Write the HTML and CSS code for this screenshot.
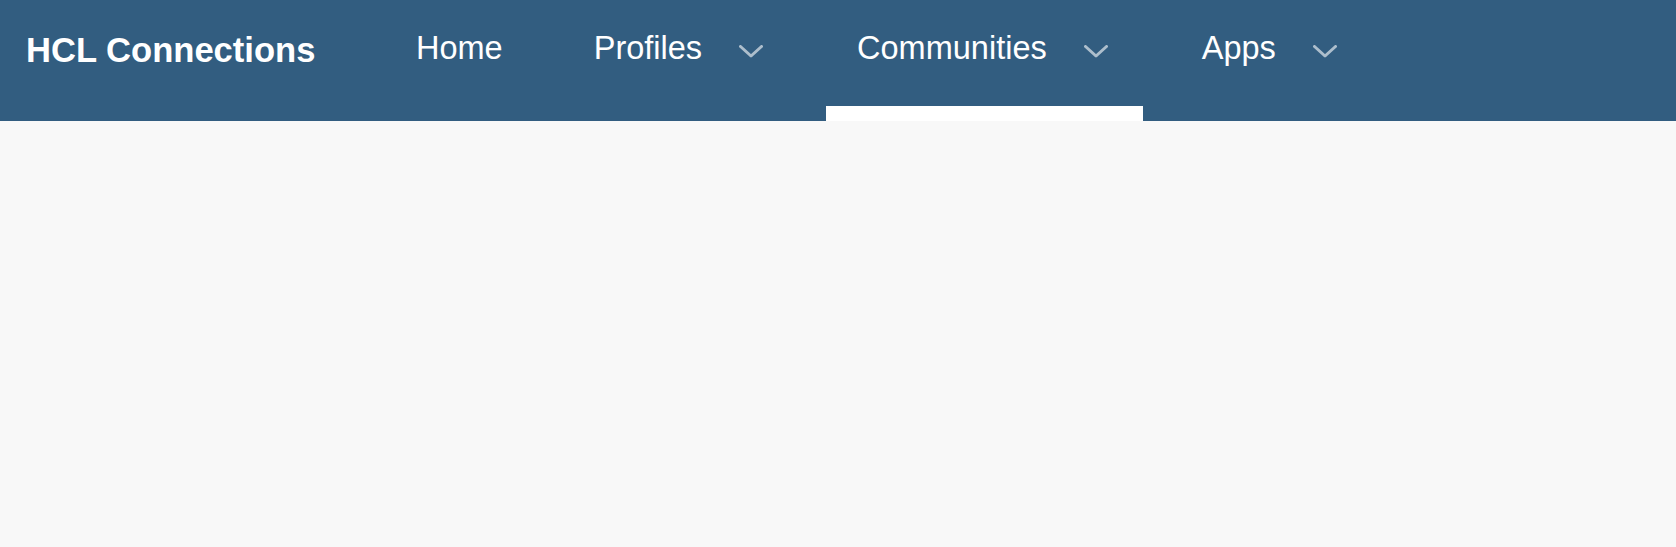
FILE: index.html
```html
<!DOCTYPE html>
<html lang="en">
<head>
<meta charset="utf-8">
<title>HCL Connections</title>
<link rel="stylesheet" href="styles.css">
</head>
<body>
<header class="topbar">
  <div class="brand">HCL Connections</div>
  <nav class="nav">
    <a class="nav-item nav-home">Home</a>
    <a class="nav-item">Profiles<svg class="chev" viewBox="0 0 24 13"><path d="M1.5 1.5 L12 11 L22.5 1.5"/></svg></a>
    <a class="nav-item active">Communities<svg class="chev" viewBox="0 0 24 13"><path d="M1.5 1.5 L12 11 L22.5 1.5"/></svg></a>
    <a class="nav-item">Apps<svg class="chev" viewBox="0 0 24 13"><path d="M1.5 1.5 L12 11 L22.5 1.5"/></svg></a>
  </nav>
</header>
<main class="content"></main>
</body>
</html>
```
FILE: styles.css
```css
* { box-sizing: border-box; }
html, body { margin: 0; padding: 0; }
body {
  background: #f8f8f8;
  font-family: "Liberation Sans", Arial, sans-serif;
  height: 547px;
  overflow: hidden;
}
.topbar {
  height: 121px;
  background: #325d80;
  display: flex;
  align-items: stretch;
  padding-left: 26px;
}
.brand {
  color: #ffffff;
  font-weight: bold;
  font-size: 34.6px;
  line-height: 1;
  padding-top: 33px;
  width: 359px;
  white-space: nowrap;
}
.nav {
  display: flex;
  align-items: stretch;
  gap: 28px;
}
.nav-item {
  position: relative;
  display: flex;
  align-items: flex-start;
  color: #ffffff;
  font-size: 32.5px;
  line-height: 1;
  padding: 32px 35px 0 31px;
  text-decoration: none;
  cursor: pointer;
  white-space: nowrap;
}
.nav-home { padding-right: 32px; }
.chev {
  width: 24px;
  height: 13px;
  margin-left: 37px;
  margin-top: 13px;
  fill: none;
  stroke: rgba(255, 255, 255, 0.6);
  stroke-width: 3;
  stroke-linecap: round;
  stroke-linejoin: round;
}
.nav-item.active::after {
  content: "";
  position: absolute;
  left: 0;
  right: 0;
  bottom: 0;
  height: 15px;
  background: #ffffff;
}
.content {
  height: 426px;
}
```
